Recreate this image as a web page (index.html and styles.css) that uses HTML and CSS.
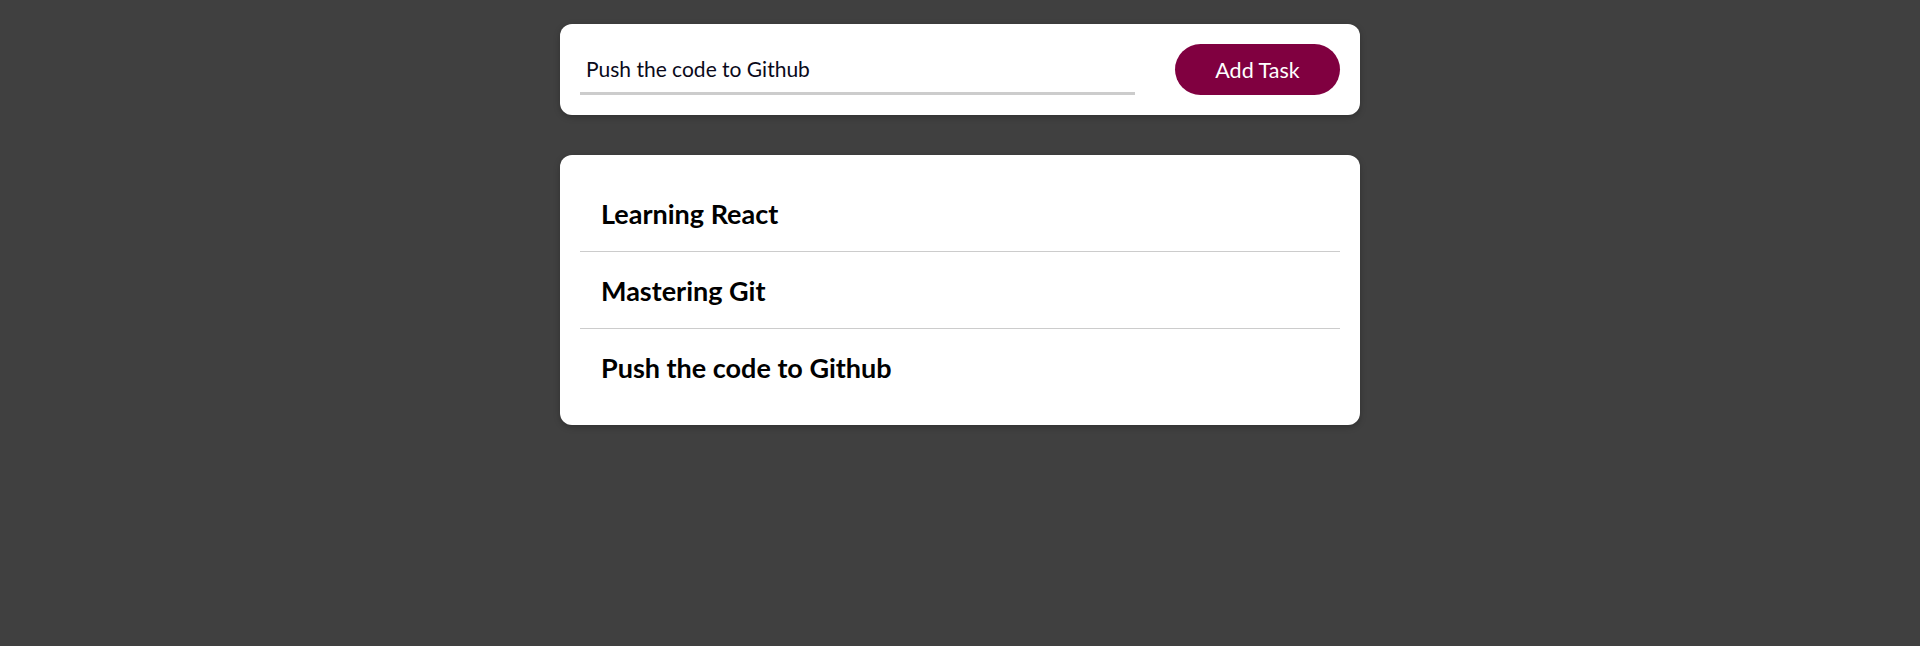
FILE: index.html
```html
<!DOCTYPE html>
<html lang="en">
<head>
<meta charset="utf-8">
<title>Todo</title>
<link rel="stylesheet" href="styles.css">
</head>
<body>
<main class="app">
  <form class="card add-form">
    <input class="task-input" type="text" value="Push the code to Github">
    <button class="add-btn" type="button">Add Task</button>
  </form>
  <ul class="card task-list">
    <li class="task">Learning React</li>
    <li class="task">Mastering Git</li>
    <li class="task">Push the code to Github</li>
  </ul>
</main>
</body>
</html>
```
FILE: styles.css
```css
html, body {
  margin: 0;
  padding: 0;
}
body {
  background: #404040;
  font-family: "Lato", "Open Sans", sans-serif;
  min-height: 646px;
}
.app {
  width: 800px;
  margin: 24px auto 0;
  display: flex;
  flex-direction: column;
  gap: 40px;
}
.card {
  background: #fff;
  border-radius: 12px;
  box-shadow: 0 2px 6px rgba(0,0,0,0.25);
}
.add-form {
  display: flex;
  align-items: center;
  gap: 40px;
  padding: 20px;
  margin: 0;
}
.task-input {
  flex: 1;
  border: none;
  border-bottom: 3px solid #cccccc;
  outline: none;
  font-family: inherit;
  font-size: 21px;
  color: #0a0a1a;
  padding: 6px 6px 10px;
  height: 46px;
  box-sizing: border-box;
  margin-top: 4px;
  background: transparent;
}
.add-btn {
  flex: 0 0 165px;
  height: 51px;
  border: none;
  border-radius: 26px;
  background: #800040;
  color: #fff;
  font-family: inherit;
  font-size: 21.5px;
  cursor: pointer;
}
.task-list {
  list-style: none;
  margin: 0;
  padding: 20px;
}
.task {
  height: 77px;
  box-sizing: border-box;
  padding: 0 21px;
  display: flex;
  align-items: center;
  font-size: 27px;
  font-weight: 700;
  color: #000;
  border-bottom: 1px solid #cccccc;
}
.task:last-child {
  height: 76px;
  border-bottom: none;
}
```
